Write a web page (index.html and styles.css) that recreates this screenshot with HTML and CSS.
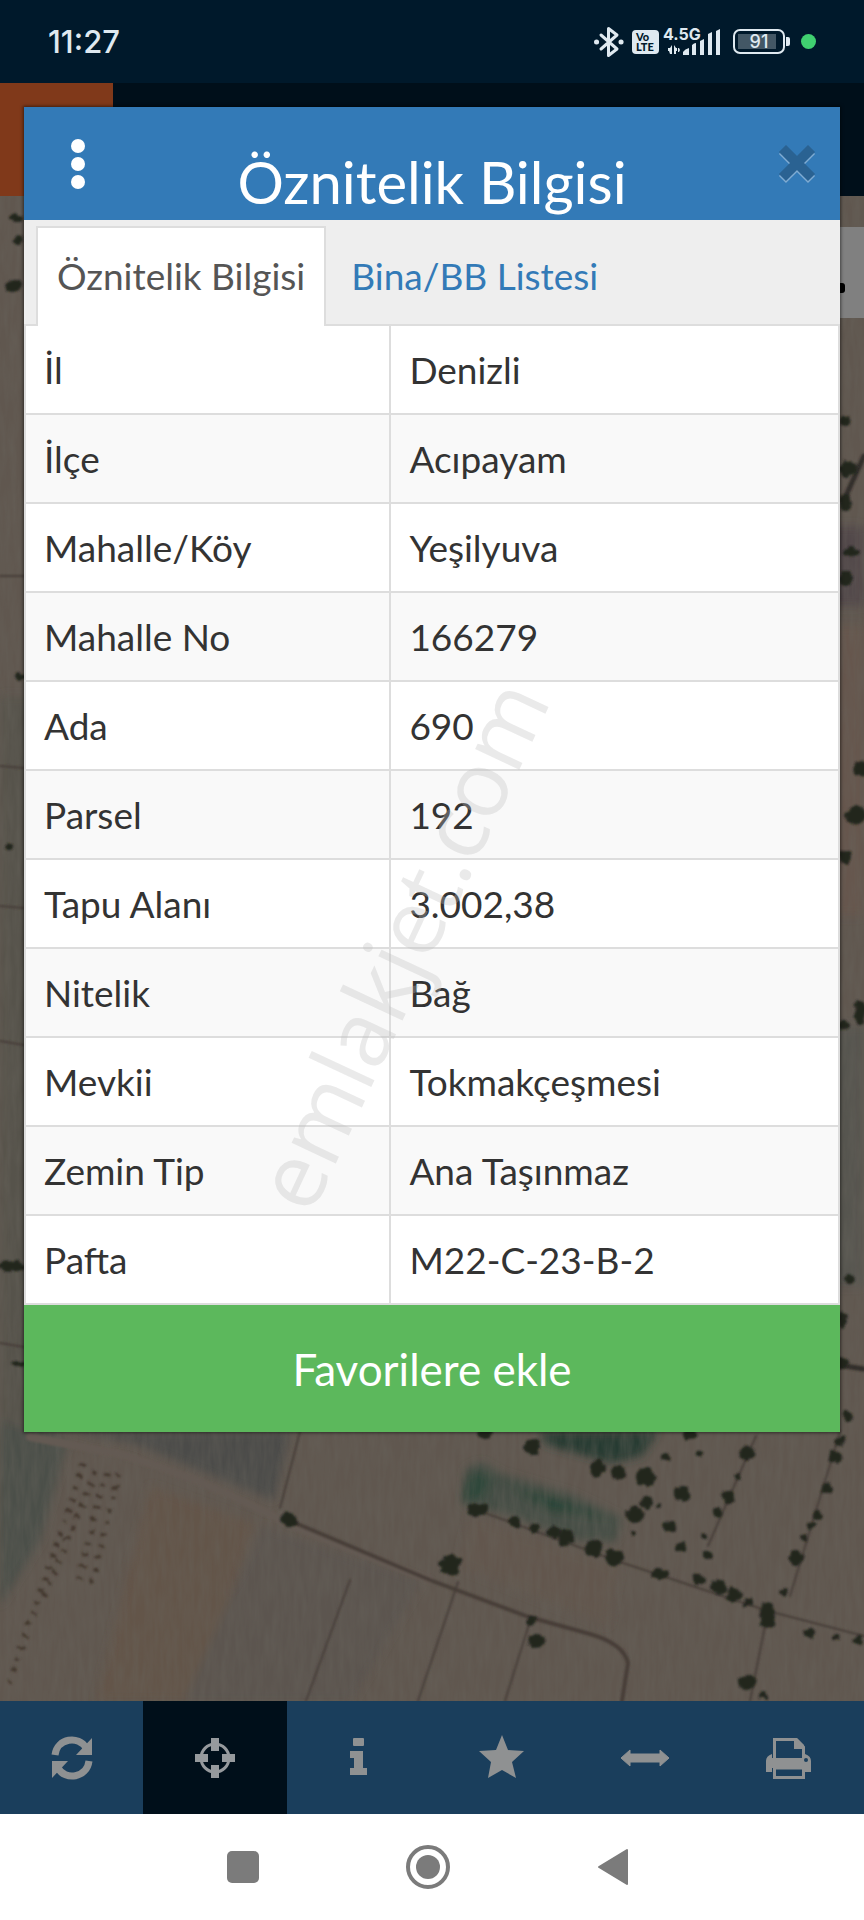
FILE: index.html
```html
<!DOCTYPE html>
<html lang="tr">
<head>
<meta charset="utf-8">
<meta name="viewport" content="width=device-width, initial-scale=1">
<title>Öznitelik Bilgisi</title>
<link rel="stylesheet" href="styles.css">
</head>
<body>
<header class="status">
  <span class="clock">11:27</span>
  <div class="status-icons">
    <svg class="bluetooth" width="30" height="32" viewBox="0 0 30 32" fill="none" stroke="#dfe9f0" stroke-width="3" stroke-linejoin="round" stroke-linecap="round"><path d="M7 9l16 14-8.500 6.500V2.500L23 9 7 23"/><path d="M2.500 16h.1M27 16h.1" stroke-width="5"/></svg>
    <span class="volte"><span>Vo</span><span>LTE</span></span>
    <span class="network">
      <span class="generation">4.5G</span>
      <svg width="58" height="28" viewBox="0 0 58 28" fill="#dfe9f0"><path d="M9 17v9H7l-1-3H5v-3h2zM11 17l2 3h1v3h-1v3h-2zM15 20h1l1 2-1 2h-1zM20 27v-3q2-3 6-4v7zM29 17q2-2 4-2v12h-4zM37 13l4-2v16h-4zM45 6q2-1 4-2v23h-4zM53 3q2-1 4-2v26h-4z"/></svg>
    </span>
    <span class="battery"><span class="level">91</span></span>
    <span class="privacy-dot"></span>
  </div>
</header>

<main class="app">
  <div class="app-bar"><div class="app-logo"></div></div>
  <div class="map">
    <svg class="terrain" viewBox="0 0 864 1505" preserveAspectRatio="xMidYMax slice" aria-hidden="true">
      <defs>
        <filter id="grain" x="0" y="0" width="100%" height="100%"><feTurbulence type="fractalNoise" baseFrequency=".18 .03" numOctaves="3" seed="4"/><feColorMatrix values="0 0 0 0 .14  0 0 0 0 .13  0 0 0 0 .11  1.2 0 0 0 -.3"/></filter>
        <filter id="soft"><feGaussianBlur stdDeviation="4"/></filter>
        <filter id="edge" x="-5%" y="-5%" width="110%" height="110%"><feGaussianBlur stdDeviation="1"/></filter>
        <filter id="foliage" x="-5%" y="-5%" width="110%" height="110%"><feTurbulence type="fractalNoise" baseFrequency=".12" numOctaves="2" seed="8" result="n"/><feDisplacementMap in="SourceGraphic" in2="n" scale="8" xChannelSelector="R" yChannelSelector="G"/><feGaussianBlur stdDeviation="1.300"/></filter>
      </defs>
      <rect width="864" height="1505" fill="#60574f"/>
      <g filter="url(#soft)">
        <path d="M0 500H60V930H0z" fill="#57534b"/>
        <path d="M0 930H60V1240H0z" fill="#56524b"/>
        <path d="M800 330h64v80h-64z" fill="#51474a"/>
        <path d="M800 430h64v290h-64z" fill="#66574e"/>
        <path d="M800 830h64v260h-64z" fill="#565550"/>
        <path d="M0 1225l68 20-28 100L0 1410z" fill="#4c4f49"/>
        <path d="M68 1236H290l-16 68-80-32-60-25z" fill="#4b4c48"/>
        <path d="M540 1236h118l-16 24-30 7-66-18z" fill="#263b32"/>
        <path d="M466 1272l16-6 20 12 70 20 50 24-6 24-40-2-70-26-44-10z" fill="#454e45"/>
        <path d="M466 1284l10-10 18 8-10 22-22 2zM510 1290l54 14 52 20-70-10z" fill="#2b4437"/>
        <path d="M150 1290l105 38-60 177H96z" fill="#635549"/>
        <path d="M262 1330l160 54-70 121H184z" fill="#5c554f"/>
        <path d="M470 1320l150 50-12 60-150-60z" fill="#62564e"/>
      </g>
      <rect width="864" height="1505" filter="url(#grain)" opacity=".5"/>
      <g fill="none" stroke-linecap="round" filter="url(#edge)">
        <path d="M30 1241L120 1258Q210 1285 288 1328L430 1384" stroke="#645a52" stroke-width="8"/>
        <path d="M288 1324L430 1384 529 1421 590 1438Q624 1448 628 1467L622 1505" stroke="#463d37" stroke-width="4"/>
        <path d="M300 1236L280 1312M0 380h24M0 570l24 2M0 710l24 2M0 845l24 4M0 1147l24 4M458 1386Q440 1440 418 1505M530 1425L505 1505M350 1384L306 1505M477 1314L620 1366 768 1415 864 1440M790 1400L840 1236M768 1415L750 1505M708 1350L756 1240" stroke="#463e38" stroke-width="2"/>
        <path d="M826 1167l38 6M864 260l-20 44" stroke="#332d29" stroke-width="5"/>
      </g>
      <path d="M84 1268L8 1490M96 1275L44 1400M106 1276L78 1388M118 1278L92 1386" fill="none" stroke="#43382f" stroke-width="6" stroke-dasharray="3 9" filter="url(#foliage)"/>
      <g fill="#24261f" filter="url(#foliage)">
        <ellipse cx="288" cy="1324" rx="8" ry="7"/><ellipse cx="450" cy="1369" rx="11" ry="10"/><circle cx="531" cy="1425" r="5"/><ellipse cx="536" cy="1445" rx="8" ry="7"/>
        <ellipse cx="477" cy="1314" rx="10" ry="7"/><circle cx="515" cy="1326" r="6"/><circle cx="534" cy="1332" r="5"/><circle cx="554" cy="1336" r="6"/><circle cx="566" cy="1342" r="8"/><circle cx="594" cy="1352" r="9"/><circle cx="614" cy="1361" r="9"/><ellipse cx="660" cy="1378" rx="9" ry="5"/>
        <circle cx="699" cy="1384" r="6"/><circle cx="719" cy="1391" r="8"/><circle cx="734" cy="1399" r="8"/><circle cx="749" cy="1406" r="4"/><ellipse cx="767" cy="1419" rx="8" ry="13"/><circle cx="747" cy="1486" r="8"/><circle cx="763" cy="1499" r="4"/>
        <circle cx="796" cy="1362" r="7"/><circle cx="804" cy="1342" r="3"/><circle cx="811" cy="1330" r="4"/><circle cx="817" cy="1319" r="5"/><circle cx="826" cy="1292" r="6"/><circle cx="836" cy="1261" r="6"/><circle cx="840" cy="1245" r="5"/><circle cx="848" cy="1221" r="5"/><circle cx="784" cy="1397" r="3"/>
        <circle cx="532" cy="1252" r="8"/><circle cx="598" cy="1272" r="8"/><circle cx="618" cy="1276" r="7"/><circle cx="646" cy="1281" r="10"/><circle cx="682" cy="1298" r="8"/><circle cx="646" cy="1306" r="6"/><circle cx="634" cy="1319" r="9"/><circle cx="670" cy="1331" r="7"/><circle cx="681" cy="1352" r="5"/><circle cx="708" cy="1359" r="5"/><circle cx="747" cy="1257" r="7"/><circle cx="728" cy="1301" r="7"/><circle cx="718" cy="1317" r="5"/><circle cx="665" cy="1261" r="4"/><circle cx="699" cy="1257" r="4"/><circle cx="738" cy="1281" r="3"/><circle cx="704" cy="1341" r="3"/><circle cx="660" cy="1311" r="3"/><circle cx="633" cy="1337" r="3"/><circle cx="485" cy="1236" r="7"/><circle cx="690" cy="1238" r="6"/><circle cx="810" cy="1437" r="4"/><circle cx="835" cy="1442" r="3"/><circle cx="858" cy="1444" r="4"/>
        <ellipse cx="14" cy="90" rx="9" ry="5"/><ellipse cx="16" cy="22" rx="7" ry="4"/><ellipse cx="18" cy="44" rx="6" ry="4"/><ellipse cx="20" cy="480" rx="5" ry="4"/><ellipse cx="10" cy="650" rx="4" ry="3"/><ellipse cx="12" cy="1070" rx="12" ry="6"/><ellipse cx="18" cy="1168" rx="7" ry="3"/>
        <ellipse cx="845" cy="224" rx="6" ry="5"/><ellipse cx="848" cy="273" rx="9" ry="8"/><ellipse cx="845" cy="306" rx="6" ry="8"/><ellipse cx="852" cy="356" rx="8" ry="5"/><ellipse cx="846" cy="382" rx="7" ry="8"/><circle cx="861" cy="572" r="7"/><circle cx="856" cy="620" r="10"/><circle cx="845" cy="660" r="7"/><ellipse cx="860" cy="816" rx="6" ry="12"/><ellipse cx="844" cy="829" rx="5" ry="5"/><ellipse cx="849" cy="1084" rx="6" ry="4"/><ellipse cx="842" cy="1124" rx="4" ry="9"/><ellipse cx="842" cy="1167" rx="7" ry="6"/>
      </g>
      <path d="M818 31h46v91h-46z" fill="#808080"/><rect x="822" y="87" width="23" height="10" rx="3"/>
    </svg>
  </div>

  <nav class="tools" aria-label="Harita araçları">
    <button class="tool" aria-label="Yenile"><svg width="48" height="48" viewBox="0 0 48 48" fill="none" stroke="#8f9192" stroke-width="7"><path d="M7 21C9 4 31 1 38 14M41 27C39 44 17 47 10 34"/><path d="M44 4v17H28zM4 44V27h16z" fill="#8f9192" stroke="none"/></svg></button>
    <button class="tool active" aria-label="Konum"><svg width="48" height="48" viewBox="0 0 48 48" fill="none" stroke="#969a9d"><circle cx="24" cy="24" r="14" stroke-width="3"/><path d="M24 4v13M24 31v13M4 24h13M31 24h13" stroke-width="8"/></svg></button>
    <button class="tool" aria-label="Bilgi"><svg width="48" height="48" viewBox="0 0 48 48" fill="#8f9192"><path d="M20 4h9q1 0 1 1v6q0 1-1 1h-9q-1 0-1-1V5q0-1 1-1zM16 17h13v17h4v7H16v-7h4V24h-4z"/></svg></button>
    <button class="tool" aria-label="Favoriler"><svg width="48" height="48" viewBox="0 0 48 48" fill="#8f9192"><path d="M24 1l6 15 16 1-12 11 4 16-14-8-14 8 3-16L1 17l17-1z"/></svg></button>
    <button class="tool" aria-label="Ölçüm"><svg width="50" height="48" viewBox="0 0 50 48" fill="#8f9192"><path d="M1 24l9-8v4h30v-4l9 8-9 8v-4H10v4z" stroke="#8f9192" stroke-linejoin="round"/></svg></button>
    <button class="tool" aria-label="Yazdır"><svg width="48" height="48" viewBox="0 0 48 48" fill="none" stroke="#8f9192" stroke-width="3"><path d="M10.500 25V5.500H32L39.500 13V25"/><path d="M30 4h3l7 7v4H30z" fill="#8f9192" stroke="none"/><path d="M8 20v4h33v-4q6 2 6 7v11h-6v-4H8v4H2V27q0-5 6-7z" fill="#8f9192" stroke="none"/><circle cx="42" cy="26" r="2" fill="#1a3e5c" stroke="none"/><path d="M10.500 34v9.500h29V34z" fill="#1a3e5c"/></svg></button>
  </nav>

  <div class="overlay">
    <section class="modal" role="dialog" aria-labelledby="modal-title">
      <header class="modal-head">
        <button class="icon-button" aria-label="Menü"><svg width="16" height="52" viewBox="0 0 16 52" fill="#fff"><circle cx="8" cy="8" r="7"/><circle cx="8" cy="26" r="7"/><circle cx="8" cy="44" r="7"/></svg></button>
        <h1 class="modal-title" id="modal-title">Öznitelik Bilgisi</h1>
        <button class="icon-button close" aria-label="Kapat"><svg width="38" height="40" viewBox="0 0 38 40" fill="none" stroke-width="10" stroke-linecap="square" stroke-linejoin="round"><path d="M8 10l22 22M30 10L8 32" stroke="#7fabd2"/><path d="M8 8l22 22M30 8L8 30" stroke="#2a6292"/></svg></button>
      </header>
      <div class="tabs" role="tablist">
        <button class="tab selected" role="tab" aria-selected="true">Öznitelik Bilgisi</button>
        <button class="tab" role="tab" aria-selected="false">Bina/BB Listesi</button>
      </div>
      <table class="attributes">
        <tbody>
          <tr><th scope="row">İl</th><td>Denizli</td></tr>
          <tr><th scope="row">İlçe</th><td>Acıpayam</td></tr>
          <tr><th scope="row">Mahalle/Köy</th><td>Yeşilyuva</td></tr>
          <tr><th scope="row">Mahalle No</th><td>166279</td></tr>
          <tr><th scope="row">Ada</th><td>690</td></tr>
          <tr><th scope="row">Parsel</th><td>192</td></tr>
          <tr><th scope="row">Tapu Alanı</th><td>3.002,38</td></tr>
          <tr><th scope="row">Nitelik</th><td>Bağ</td></tr>
          <tr><th scope="row">Mevkii</th><td>Tokmakçeşmesi</td></tr>
          <tr><th scope="row">Zemin Tip</th><td>Ana Taşınmaz</td></tr>
          <tr><th scope="row">Pafta</th><td>M22-C-23-B-2</td></tr>
        </tbody>
      </table>
      <button class="favorite">Favorilere ekle</button>
    </section>
  </div>
  <span class="watermark">emlakjet.com</span>
</main>

<nav class="system-nav" aria-label="Sistem gezinmesi">
  <button aria-label="Son uygulamalar"><svg width="48" height="48" viewBox="0 0 48 48" fill="#7b7b7b"><rect x="8" y="8" width="32" height="32" rx="5"/></svg></button>
  <button aria-label="Ana ekran"><svg width="48" height="48" viewBox="0 0 48 48"><circle cx="24" cy="24" r="20" fill="none" stroke="#7b7b7b" stroke-width="4"/><circle cx="24" cy="24" r="12" fill="#7b7b7b"/></svg></button>
  <button aria-label="Geri"><svg width="48" height="48" viewBox="0 0 48 48" fill="#7b7b7b" stroke="#7b7b7b" stroke-width="2" stroke-linejoin="round"><path d="M10 24L38 7v34z"/></svg></button>
</nav>
</body>
</html>
```
FILE: styles.css
```css
* {
  box-sizing: border-box;
}

body {
  margin: 0;
  min-height: 100vh;
  display: flex;
  flex-direction: column;
  font-family: Lato, "Open Sans", sans-serif;
  color: #333;
  background: #fff;
}

button {
  margin: 0;
  padding: 0;
  border: 0;
  background: none;
  font: inherit;
  color: inherit;
}

svg {
  display: block;
}

/* Status bar */
.status {
  height: 83px;
  padding: 0 48px;
  display: flex;
  align-items: center;
  justify-content: space-between;
  background: #00192b;
  color: #dfe9f0;
}

.clock {
  font: 500 31px Inter, sans-serif;
}

.status-icons {
  display: flex;
  align-items: center;
  gap: 8px;
}

.volte {
  width: 27px;
  height: 24px;
  border-radius: 4px;
  display: flex;
  flex-direction: column;
  justify-content: center;
  padding-left: 4px;
  background: #dfe9f0;
  color: #00192b;
  font: 900 11px/10px Lato, sans-serif;
}

.network {
  position: relative;
  margin-left: -4px;
}

.generation {
  position: absolute;
  top: -2px;
  left: 0;
  font: 700 16px/16px Inter, sans-serif;
}

.battery {
  position: relative;
  width: 52px;
  height: 25px;
  margin: 0 8px 0 4px;
  padding: 3px;
  border: 2px solid #dfe9f0;
  border-radius: 7px;
}

.battery::after {
  content: "";
  position: absolute;
  top: 6px;
  right: -7px;
  width: 4px;
  height: 9px;
  border-radius: 0 2px 2px 0;
  background: #dfe9f0;
}

.level {
  display: block;
  text-align: center;
  font: 500 18px/15px Inter, sans-serif;
  background: linear-gradient(90deg, #435765 90%, transparent 90%);
}

.privacy-dot {
  width: 15px;
  height: 15px;
  border-radius: 50%;
  background: #40d070;
}

/* Map application behind the dialog */
.app {
  position: relative;
  flex: 1;
  display: flex;
  flex-direction: column;
}

.app-bar {
  height: 113px;
  background: #000f1a;
}

.app-logo {
  width: 113px;
  height: 100%;
  background: #80391a;
}

.map {
  position: relative;
  flex: 1;
  overflow: hidden;
  background: #60574f;
}

.terrain {
  position: absolute;
  inset: 0;
  width: 100%;
  height: 100%;
}

.tools {
  height: 113px;
  padding-right: 4px;
  display: flex;
  background: #1a3e5c;
}

.tool {
  flex: 1;
  display: flex;
  align-items: center;
  justify-content: center;
}

.tool.active {
  background: #000f1a;
}

/* Dialog */
.overlay {
  position: absolute;
  inset: 0;
  padding: 24px;
}

.modal {
  background: #fff;
  box-shadow: 0 0 3px 1px rgba(0, 0, 0, 0.5);
}

.modal-head {
  height: 113px;
  padding: 0 24px;
  display: flex;
  align-items: center;
  background: #337ab7;
  color: #fff;
}

.modal-title {
  flex: 1;
  margin: 0;
  padding-top: 36px;
  text-align: center;
  font-size: 58px;
  font-weight: 400;
  line-height: 72px;
}

.icon-button {
  width: 60px;
  height: 52px;
  display: flex;
  align-items: center;
  justify-content: center;
}

.icon-button.close {
  justify-content: flex-end;
}

.tabs {
  height: 106px;
  padding: 6px 12px 0;
  display: flex;
  gap: 4px;
  background: #eee;
  border-bottom: 2px solid #ddd;
}

.tab {
  height: 100px;
  padding: 0 19px 4px;
  border: 2px solid transparent;
  border-bottom: 0;
  font-size: 37px;
  color: #337ab7;
}

.tab.selected {
  border-color: #ddd;
  background: #fff;
  color: #555;
}

.attributes {
  width: 100%;
  table-layout: fixed;
  border-spacing: 0;
  border: 0 solid #ddd;
  border-width: 0 2px;
  font-size: 37px;
  line-height: 48px;
}

.attributes th,
.attributes td {
  height: 89px;
  padding: 0 18px;
  border-bottom: 2px solid #ddd;
  text-align: left;
  font-weight: 400;
}

.attributes th {
  width: 45%;
  border-right: 2px solid #ddd;
}

.attributes tr:nth-child(even) {
  background: #f9f9f9;
}

.favorite {
  display: block;
  width: 100%;
  height: 127px;
  background: #5cb85c;
  color: #fff;
  font-size: 44px;
}

/* Diagonal site mark over the dialog */
.watermark {
  position: absolute;
  left: calc(50% - 32px);
  top: 861px;
  transform: translate(-50%, -50%) rotate(-65deg);
  font: 400 91px/1 "Open Sans", sans-serif;
  color: rgba(190, 190, 190, 0.32);
  pointer-events: none;
}

/* Android navigation */
.system-nav {
  height: 106px;
  padding-right: 8px;
  display: flex;
  align-items: center;
  justify-content: center;
  gap: 137px;
  background: #fff;
}
```
